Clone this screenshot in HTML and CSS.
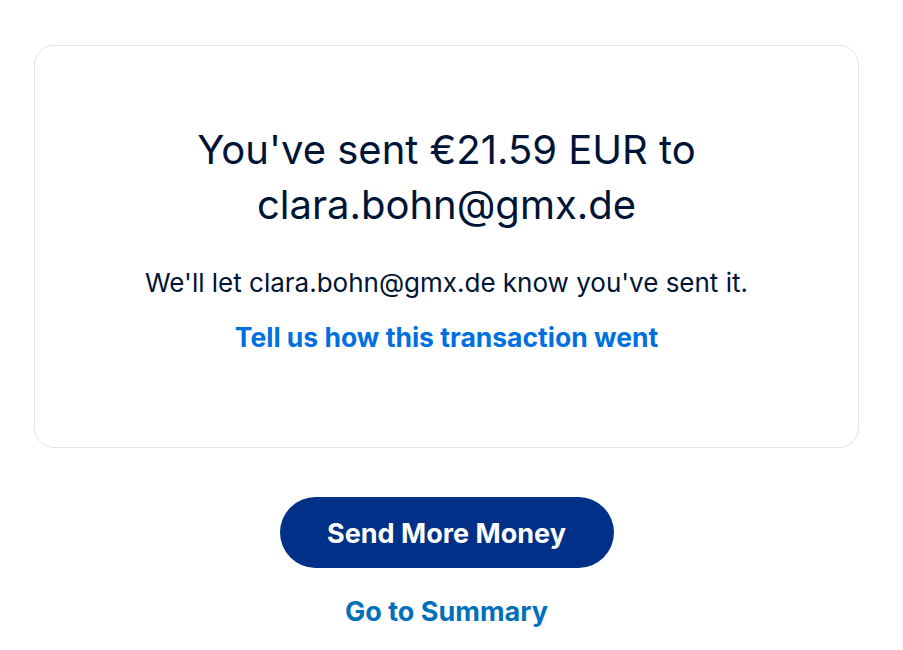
FILE: index.html
```html
<!DOCTYPE html>
<html lang="en">
<head>
<meta charset="utf-8">
<title>Sent</title>
<link rel="stylesheet" href="styles.css">
</head>
<body>
<main class="page">
  <section class="card">
    <h1 class="title">You've sent €21.59 EUR to clara.bohn@gmx.de</h1>
    <p class="note">We'll let clara.bohn@gmx.de know you've sent it.</p>
    <a class="feedback" href="#">Tell us how this transaction went</a>
  </section>
  <div class="actions">
    <a class="btn-primary" href="#">Send More Money</a>
    <a class="summary" href="#">Go to Summary</a>
  </div>
</main>
</body>
</html>
```
FILE: styles.css
```css
* { box-sizing: border-box; }
html, body { margin: 0; padding: 0; background: #fff; }
body { font-family: Inter, "Liberation Sans", Arial, sans-serif; color: #001435; }
.page { padding: 45px 44px 0 34px; display: flex; flex-direction: column; }
.card {
  border: 1px solid #e3e3e3;
  border-radius: 20px;
  height: 403px;
  display: flex;
  flex-direction: column;
  align-items: center;
  padding: 76px 60px 0;
  text-align: center;
}
.title {
  margin: 0;
  font-size: 40px;
  font-weight: 400;
  line-height: 55px;
  max-width: 560px;
}
.note { margin: 36px 0 0; font-size: 26px; line-height: 30px; }
.feedback {
  margin-top: 24px;
  font-size: 26.5px; font-weight: 700; line-height: 30px;
  color: #0070e0; text-decoration: none;
}
.actions { display: flex; flex-direction: column; align-items: center; padding-top: 49px; }
.btn-primary {
  width: 334px; height: 71px; border-radius: 36px;
  background: #003087; color: #fff;
  display: flex; align-items: center; justify-content: center;
  font-size: 27px; font-weight: 700; text-decoration: none;
  padding-top: 2px;
}
.summary {
  margin-top: 29px;
  font-size: 27px; font-weight: 700; line-height: 30px;
  color: #0070ba; text-decoration: none;
}
```
